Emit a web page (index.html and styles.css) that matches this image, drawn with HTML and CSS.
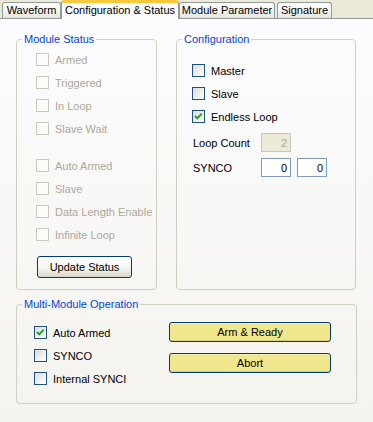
FILE: index.html
```html
<!DOCTYPE html>
<html lang="en">
<head>
    <meta charset="UTF-8">
    <meta name="viewport" content="width=device-width, initial-scale=1.0">
    <title>Configuration &amp; Status</title>
    <link rel="stylesheet" href="styles.css">
</head>
<body>
    <div class="tabs">
        <div class="tab tab-wave">Waveform</div>
        <div class="tab tab-active">Configuration &amp; Status</div>
        <div class="tab tab-param">Module Parameter</div>
        <div class="tab tab-sig">Signature</div>
    </div>
    <div class="panel">
        <div class="top-row">
            <fieldset class="group">
                <legend>Module Status</legend>
                <div class="status">
                    <div class="check disabled"><span class="box"></span>Armed</div>
                    <div class="check disabled"><span class="box"></span>Triggered</div>
                    <div class="check disabled"><span class="box"></span>In Loop</div>
                    <div class="check disabled"><span class="box"></span>Slave Wait</div>
                    <div class="check disabled gap"><span class="box"></span>Auto Armed</div>
                    <div class="check disabled"><span class="box"></span>Slave</div>
                    <div class="check disabled"><span class="box"></span>Data Length Enable</div>
                    <div class="check disabled"><span class="box"></span>Infinite Loop</div>
                    <button type="button" class="btn btn-update">Update Status</button>
                </div>
            </fieldset>
            <fieldset class="group">
                <legend>Configuration</legend>
                <div class="config">
                    <div class="check"><span class="box"></span>Master</div>
                    <div class="check"><span class="box"></span>Slave</div>
                    <div class="check"><span class="box checked"><svg width="11" height="11" viewBox="0 0 11 11"><path d="M2 5 L4.2 7.4 L8.8 2.6" fill="none" stroke="#21a121" stroke-width="2"/></svg></span>Endless Loop</div>
                    <div class="field-row first">
                        <span class="field-label">Loop Count</span>
                        <input type="text" class="num disabled-input" value="2" disabled>
                    </div>
                    <div class="field-row">
                        <span class="field-label">SYNCO</span>
                        <input type="text" class="num" value="0">
                        <input type="text" class="num" value="0">
                    </div>
                </div>
            </fieldset>
        </div>
        <fieldset class="group multi">
            <legend>Multi-Module Operation</legend>
            <div class="multi-body">
                <div class="multi-checks">
                    <div class="check"><span class="box checked"><svg width="11" height="11" viewBox="0 0 11 11"><path d="M2 5 L4.2 7.4 L8.8 2.6" fill="none" stroke="#21a121" stroke-width="2"/></svg></span>Auto Armed</div>
                    <div class="check"><span class="box"></span>SYNCO</div>
                    <div class="check"><span class="box"></span>Internal SYNCI</div>
                </div>
                <div class="multi-buttons">
                    <button type="button" class="btn btn-yellow">Arm &amp; Ready</button>
                    <button type="button" class="btn btn-yellow">Abort</button>
                </div>
            </div>
        </fieldset>
    </div>
</body>
</html>
```

FILE: styles.css
```css
* {
    box-sizing: border-box;
}

body {
    margin: 0;
    width: 373px;
    height: 422px;
    overflow: hidden;
    font-family: "Liberation Sans", Arial, sans-serif;
    font-size: 11px;
    color: #000;
    background: #ece9d8;
}

.tabs {
    display: flex;
    align-items: flex-end;
    height: 19px;
    border-bottom: 1px solid #919b9c;
}

.tab {
    height: 16px;
    line-height: 15px;
    text-align: center;
    white-space: nowrap;
    border: 1px solid #919b9c;
    border-bottom: none;
    border-radius: 3px 3px 0 0;
    background: linear-gradient(#ffffff, #f3f3ef 60%, #e4e3dc);
}

.tab-wave {
    margin-left: 2px;
    width: 59px;
}

.tab-active {
    width: 118px;
    height: 19px;
    line-height: 15px;
    margin-bottom: -1px;
    border-top: 3px solid #ffc83c;
    background: #fcfcfe;
    position: relative;
}

.tab-param {
    width: 96px;
}

.tab-sig {
    margin-left: 2px;
    width: 55px;
}

.panel {
    height: 403px;
    padding: 14px 0 0 16px;
    background: linear-gradient(#fcfcfe, #f4f3ee);
}

.top-row {
    display: grid;
    grid-template-columns: 141px 180px;
    column-gap: 19px;
}

.group {
    margin: 0;
    padding: 0;
    min-width: 0;
    border: 1px solid #d0d0bf;
    border-radius: 4px;
}

.group legend {
    margin-left: 5px;
    padding: 0 2px;
    line-height: 13px;
    color: #0046d5;
}

.status {
    padding: 2px 0 11px 19px;
}

.config {
    padding: 13px 0 0 15px;
}

.check {
    display: flex;
    align-items: center;
    height: 23px;
    white-space: nowrap;
}

.check.gap {
    margin-top: 14px;
}

.box {
    display: flex;
    align-items: center;
    justify-content: center;
    width: 13px;
    height: 13px;
    margin-right: 6px;
    border: 1px solid #1c5180;
    background: linear-gradient(135deg, #dcdcd7, #ffffff);
}

.check.disabled {
    color: #aca899;
}

.check.disabled .box {
    border-color: #cac8bb;
    background: #fbfbf9;
}

.btn {
    font-family: "Liberation Sans", Arial, sans-serif;
    font-size: 11px;
    color: #000;
    border: 1px solid #003c74;
    border-radius: 3px;
    padding: 0;
    cursor: pointer;
}

.btn-update {
    display: block;
    margin: 10px 0 0 1px;
    width: 95px;
    height: 22px;
    background: linear-gradient(#ffffff, #f3f3ee 60%, #d9d5cb);
}

.field-row {
    display: flex;
    align-items: center;
    height: 25px;
}

.field-row.first {
    margin-top: 2px;
}

.field-label {
    width: 69px;
    padding-left: 1px;
}

.num {
    width: 30px;
    height: 19px;
    margin: 0 6px 0 0;
    padding: 0 3px 0 0;
    border: 1px solid #7f9db9;
    background: #fff;
    font-family: "Liberation Sans", Arial, sans-serif;
    font-size: 11px;
    text-align: right;
    color: #000;
}

.disabled-input {
    background: #ece9d8;
    border-color: #c9c7ba;
    color: #aca899;
}

.multi {
    width: 341px;
    margin-top: 8px;
}

.multi-body {
    display: flex;
    padding: 10px 0 13px 17px;
}

.multi-checks {
    width: 135px;
}

.multi-buttons {
    display: flex;
    flex-direction: column;
    gap: 11px;
    padding-top: 1px;
}

.btn-yellow {
    width: 162px;
    height: 20px;
    background: #f0e68c;
    box-shadow: inset 0 -1px 0 #d8cf7c, inset 0 1px 0 #f7f0b0;
}
```
